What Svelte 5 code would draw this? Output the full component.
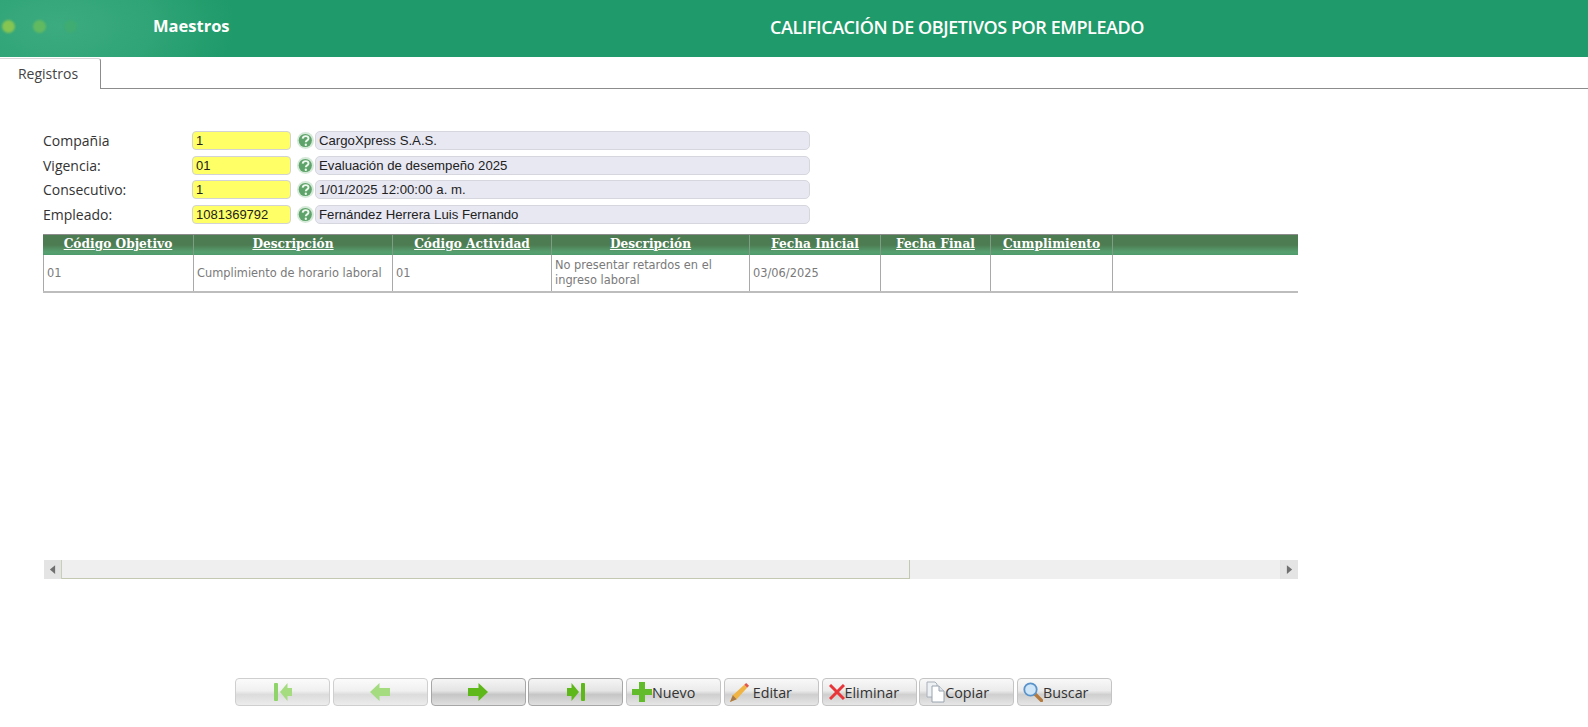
<script>
  const fields = [
    { label: 'Compañia', code: '1', text: 'CargoXpress S.A.S.' },
    { label: 'Vigencia:', code: '01', text: 'Evaluación de desempeño 2025' },
    { label: 'Consecutivo:', code: '1', text: '1/01/2025 12:00:00 a. m.' },
    { label: 'Empleado:', code: '1081369792', text: 'Fernández Herrera Luis Fernando' }
  ];
  const cols = [
    { title: 'Código Objetivo', cls: 'c1', value: '01' },
    { title: 'Descripción', cls: 'c2', value: 'Cumplimiento de horario laboral' },
    { title: 'Código Actividad', cls: 'c3', value: '01' },
    { title: 'Descripción', cls: 'c4', value: 'No presentar retardos en el ingreso laboral' },
    { title: 'Fecha Inicial', cls: 'c5', value: '03/06/2025' },
    { title: 'Fecha Final', cls: 'c6', value: '' },
    { title: 'Cumplimiento', cls: 'c7', value: '' },
    { title: '', cls: 'c8', value: '' }
  ];
</script>

<div class="page">
  <header class="top">
    <div class="dots"><i class="d1"></i><i class="d2"></i><i class="d3"></i></div>
    <div class="module">Maestros</div>
    <h1>CALIFICACIÓN DE OBJETIVOS POR EMPLEADO</h1>
  </header>

  <nav class="tabs"><div class="tab">Registros</div></nav>

  <section class="form">
    {#each fields as f}
      <div class="row">
        <span class="lbl">{f.label}</span>
        <span class="code">{f.code}</span>
        <svg class="help" viewBox="0 0 16 16" width="17" height="17">
          <circle cx="8" cy="8" r="8" fill="#d5e9d8" />
          <circle cx="7.800" cy="8" r="6.200" fill="#5ea46a" />
          <path d="M5.300 6.200c.3-1.700 1.600-2.300 2.800-2.300 1.600 0 2.700.9 2.700 2.200 0 1.800-2.500 1.800-2.500 3.600" fill="none" stroke="#eef7ee" stroke-width="1.800" />
          <circle cx="8.300" cy="12" r="1.100" fill="#eef7ee" />
        </svg>
        <span class="desc">{f.text}</span>
      </div>
    {/each}
  </section>

  <section class="grid">
    <div class="thead">
      {#each cols as c}
        <div class="th {c.cls}">{c.title}</div>
      {/each}
    </div>
    <div class="tbody">
      {#each cols as c}
        <div class="td {c.cls}">{c.value}</div>
      {/each}
    </div>
  </section>

  <div class="scroll">
    <div class="arrow"><svg viewBox="0 0 8 10" width="7" height="9"><path d="M7 0v10L1 5z" fill="#6f6f6f" /></svg></div>
    <div class="thumb"></div>
    <div class="track"></div>
    <div class="arrow right"><svg viewBox="0 0 8 10" width="7" height="9"><path d="M1 0v10l6-5z" fill="#6f6f6f" /></svg></div>
  </div>

  <footer class="bar">
    <button class="off"><svg viewBox="0 0 20 20" width="20" height="20"><rect x="1" y="1" width="4" height="18" rx="1" fill="#8fd468" /><path d="M7 10l7.500-9v5H19v8h-4.500v5z" fill="#a5dc80" /></svg></button>
    <button class="off"><svg viewBox="0 0 22 20" width="22" height="20"><path d="M1 10l9.500-9v5h10.500v8H10.500v5z" fill="#a5dc80" /></svg></button>
    <button class="on"><svg viewBox="0 0 22 20" width="22" height="20"><path d="M21 10l-9.500-9v5H1v8h10.500v5z" fill="#5fb81a" /></svg></button>
    <button class="on"><svg viewBox="0 0 20 20" width="20" height="20"><rect x="15" y="1" width="4" height="18" rx="1" fill="#5fb81a" /><path d="M13 10L5.500 1v5H1v8h4.500v5z" fill="#5fb81a" /></svg></button>
    <button class="lab nuevo"><svg viewBox="0 0 20 20" width="20" height="20"><path d="M7 0h6v7h7v6h-7v7H7v-7H0V7h7z" fill="#62bb2a" /></svg><span>Nuevo</span></button>
    <button class="lab editar"><svg viewBox="0 0 22 22" width="21" height="21"><path d="M1 21l3-7L16 3l3 3L8 18z" fill="#f0b445" /><path d="M1 21l3-7 4 4z" fill="#a87a4a" /><path d="M16 3l2-2 3 3-2 2z" fill="#e2574c" /></svg><span>Editar</span></button>
    <button class="lab eliminar"><svg viewBox="0 0 16 16" width="16" height="16"><path d="M1 1l14 14M15 1L1 15" stroke="#e8353a" stroke-width="3" fill="none" /></svg><span>Eliminar</span></button>
    <button class="lab copiar"><svg viewBox="0 0 19 22" width="19" height="22"><path d="M1 1h8l2 2v13H1z" fill="#eef1f4" stroke="#a8b0b8" /><path d="M6 5h7l5 5v11H6z" fill="#fff" stroke="#98a4ae" /><path d="M13 5v5h5" fill="#dfe5ea" stroke="#98a4ae" /></svg><span>Copiar</span></button>
    <button class="lab buscar"><svg viewBox="0 0 20 20" width="20" height="20"><path d="M12 12l6.500 6.500" stroke="#b4793c" stroke-width="3.400" stroke-linecap="round" /><circle cx="7.500" cy="7.500" r="6.200" fill="#cfe6f8" stroke="#5a93c9" stroke-width="1.800" /></svg><span>Buscar</span></button>
  </footer>
</div>

<style>
  :global(body) {
    margin: 0;
    background: #fff;
  }
  .page {
    height: 727px;
    overflow: hidden;
    font-family: "Open Sans", sans-serif;
  }
  .top {
    height: 57px;
    display: flex;
    align-items: center;
    background: radial-gradient(ellipse 175px 90px at 60px 26px, #3cab80 0%, #2fa476 55%, #1f9a6a 100%), #1f9a6a;
    color: #fff;
  }
  .dots {
    width: 153px;
    flex: none;
    display: flex;
    gap: 18px;
    padding: 0 0 4px 2px;
    box-sizing: border-box;
  }
  .dots i {
    width: 13px;
    height: 13px;
    border-radius: 50%;
    filter: blur(1px);
  }
  .d1 { background: #86c552; }
  .d2 { background: #62ba60; }
  .d3 { background: #3fac72; }
  .module {
    width: 617px;
    flex: none;
    font-size: 16.500px;
    font-weight: 700;
    padding-bottom: 6px;
  }
  h1 {
    margin: 0;
    padding-bottom: 3px;
    font-size: 18px;
    font-weight: 600;
    letter-spacing: -0.42px;
    white-space: nowrap;
  }
  .tabs {
    margin-top: 1px;
    height: 31px;
    box-sizing: border-box;
    border-bottom: 1px solid #8c8c8c;
  }
  .tab {
    width: 101px;
    height: 31px;
    box-sizing: border-box;
    padding-right: 4px;
    background: #fff;
    border-right: 1px solid #8c8c8c;
    border-top: 1px solid #d8d8d8;
    border-radius: 0 3px 0 0;
    text-align: center;
    font-size: 14px;
    line-height: 29px;
    color: #444;
  }
  .form {
    margin: 42px 0 0 43px;
    display: flex;
    flex-direction: column;
    gap: 5.700px;
  }
  .row {
    display: flex;
    align-items: center;
    height: 19px;
  }
  .lbl {
    width: 149px;
    flex: none;
    font-size: 14px;
    color: #333;
  }
  .code {
    width: 99px;
    height: 19px;
    box-sizing: border-box;
    flex: none;
    background: #ffff66;
    border: 1px solid #d3d3d3;
    border-radius: 4px;
    padding-left: 3px;
    font: 13px/17px "Liberation Sans", sans-serif;
    color: #222;
  }
  .help {
    margin: 0 1px 0 6px;
    flex: none;
  }
  .desc {
    width: 495px;
    height: 19px;
    box-sizing: border-box;
    flex: none;
    background: #e8e8f2;
    border: 1px solid #d6d6de;
    border-radius: 5px;
    padding-left: 3px;
    font: 13.200px/17px "Liberation Sans", sans-serif;
    color: #222;
  }
  .grid {
    margin: 10px 0 0 43px;
    width: 1255px;
  }
  .thead, .tbody {
    display: flex;
  }
  .thead {
    height: 21px;
    box-sizing: border-box;
    border-top: 1px solid #8c8c8c;
    background: linear-gradient(#4d7c52 0 50%, #57a070 85%, #4f9b6c 100%);
  }
  .th {
    box-sizing: border-box;
    height: 20px;
    border-right: 1px solid #7f9c84;
    text-align: center;
    color: #fff;
    font: 700 12.200px/18px "DejaVu Serif", serif;
    text-decoration: underline;
    white-space: nowrap;
  }
  .tbody {
    height: 38px;
    box-sizing: border-box;
    border-bottom: 2px solid #bdbdbd;
  }
  .td {
    box-sizing: border-box;
    height: 36px;
    border-right: 1px solid #a9a9a9;
    padding: 0 3px;
    display: flex;
    align-items: center;
    color: #7a7a7a;
    font: 11.400px/15px "DejaVu Sans", sans-serif;
  }
  .tbody .c1 { border-left: 1px solid #a9a9a9; }
  .c1 { width: 151px; }
  .c2 { width: 199px; }
  .c3 { width: 159px; }
  .c4 { width: 198px; }
  .c5 { width: 131px; }
  .c6 { width: 110px; }
  .c7 { width: 122px; }
  .c8 { width: 185px; border-right: none !important; }
  .scroll {
    margin: 267px 0 0 44px;
    width: 1254px;
    height: 18.500px;
    display: flex;
    background: #efefef;
  }
  .arrow {
    width: 18px;
    flex: none;
    display: flex;
    align-items: center;
    justify-content: center;
    box-sizing: border-box;
    background: #e4e4e4;
    border-right: 1px solid #c8ceba;
  }
  .arrow.right {
    border-right: none;
    border-left: 1px solid #e2e2e2;
  }
  .thumb {
    width: 848px;
    flex: none;
    box-sizing: border-box;
    background: #efefef;
    border-right: 1px solid #c2c9b0;
    border-bottom: 1px solid #c2c9b0;
  }
  .track {
    flex: 1;
  }
  .bar {
    margin: 99.500px 0 0 235px;
    display: flex;
    gap: 2.750px;
  }
  button {
    width: 95px;
    height: 28px;
    flex: none;
    padding: 0;
    box-sizing: border-box;
    border: 1px solid #cfcfcf;
    border-radius: 4px;
    background: linear-gradient(#fbfbfb 0%, #f0f0f0 45%, #dcdcdc 60%, #ececec 100%);
    display: flex;
    align-items: center;
    justify-content: center;
    font: 14.300px "Open Sans", sans-serif;
    color: #333;
  }
  button.on {
    border-color: #a6a6a6;
    background: linear-gradient(#f5f5f5 0%, #e4e4e4 45%, #c6c6c6 60%, #e0e0e0 100%);
  }
  button.lab {
    border-color: #c4c4c4;
    background: linear-gradient(#f8f8f8 0%, #ebebeb 45%, #cfcfcf 60%, #e6e6e6 100%);
    justify-content: flex-start;
  }
  .nuevo { padding-left: 5px; }
  .editar { padding-left: 4px; gap: 3px; }
  .eliminar { padding-left: 6px; }
  .copiar { padding-left: 6px; }
  .buscar { padding-left: 5px; }
</style>
